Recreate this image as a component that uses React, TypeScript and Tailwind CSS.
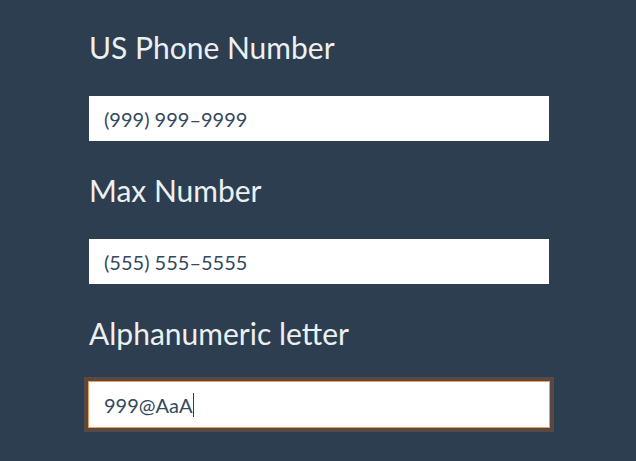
import React from "react";

const fields = [
  { label: "US Phone Number", value: "(999) 999–9999", focused: false },
  { label: "Max Number", value: "(555) 555–5555", focused: false },
  { label: "Alphanumeric letter", value: "999@AaA", focused: true },
];

const App = () => {
  return (
    <div
      className="w-[636px] h-[461px] overflow-hidden bg-[#2c3e50] pl-[89px] pt-[30px]"
      style={{ fontFamily: "Lato, 'Open Sans', sans-serif" }}
    >
      {fields.map((f) => (
        <div key={f.label} className="mb-8">
          <h2 className="text-[30px] leading-[34px] text-[#ecf0f1] mb-8">
            {f.label}
          </h2>
          <div
            className={
              f.focused
                ? "w-[460px] h-[45px] bg-white flex items-center pl-[15px] text-[20px] text-[#34495e] shadow-[0_0_0_1px_#ef9a5e,0_0_0_5px_#5a4943]"
                : "w-[460px] h-[45px] bg-white flex items-center pl-[15px] text-[20px] text-[#34495e]"
            }
          >
            <span>{f.value}</span>
            {f.focused && <span className="w-px h-[24px] bg-[#2c3e50]" />}
          </div>
        </div>
      ))}
    </div>
  );
};

export default App;
